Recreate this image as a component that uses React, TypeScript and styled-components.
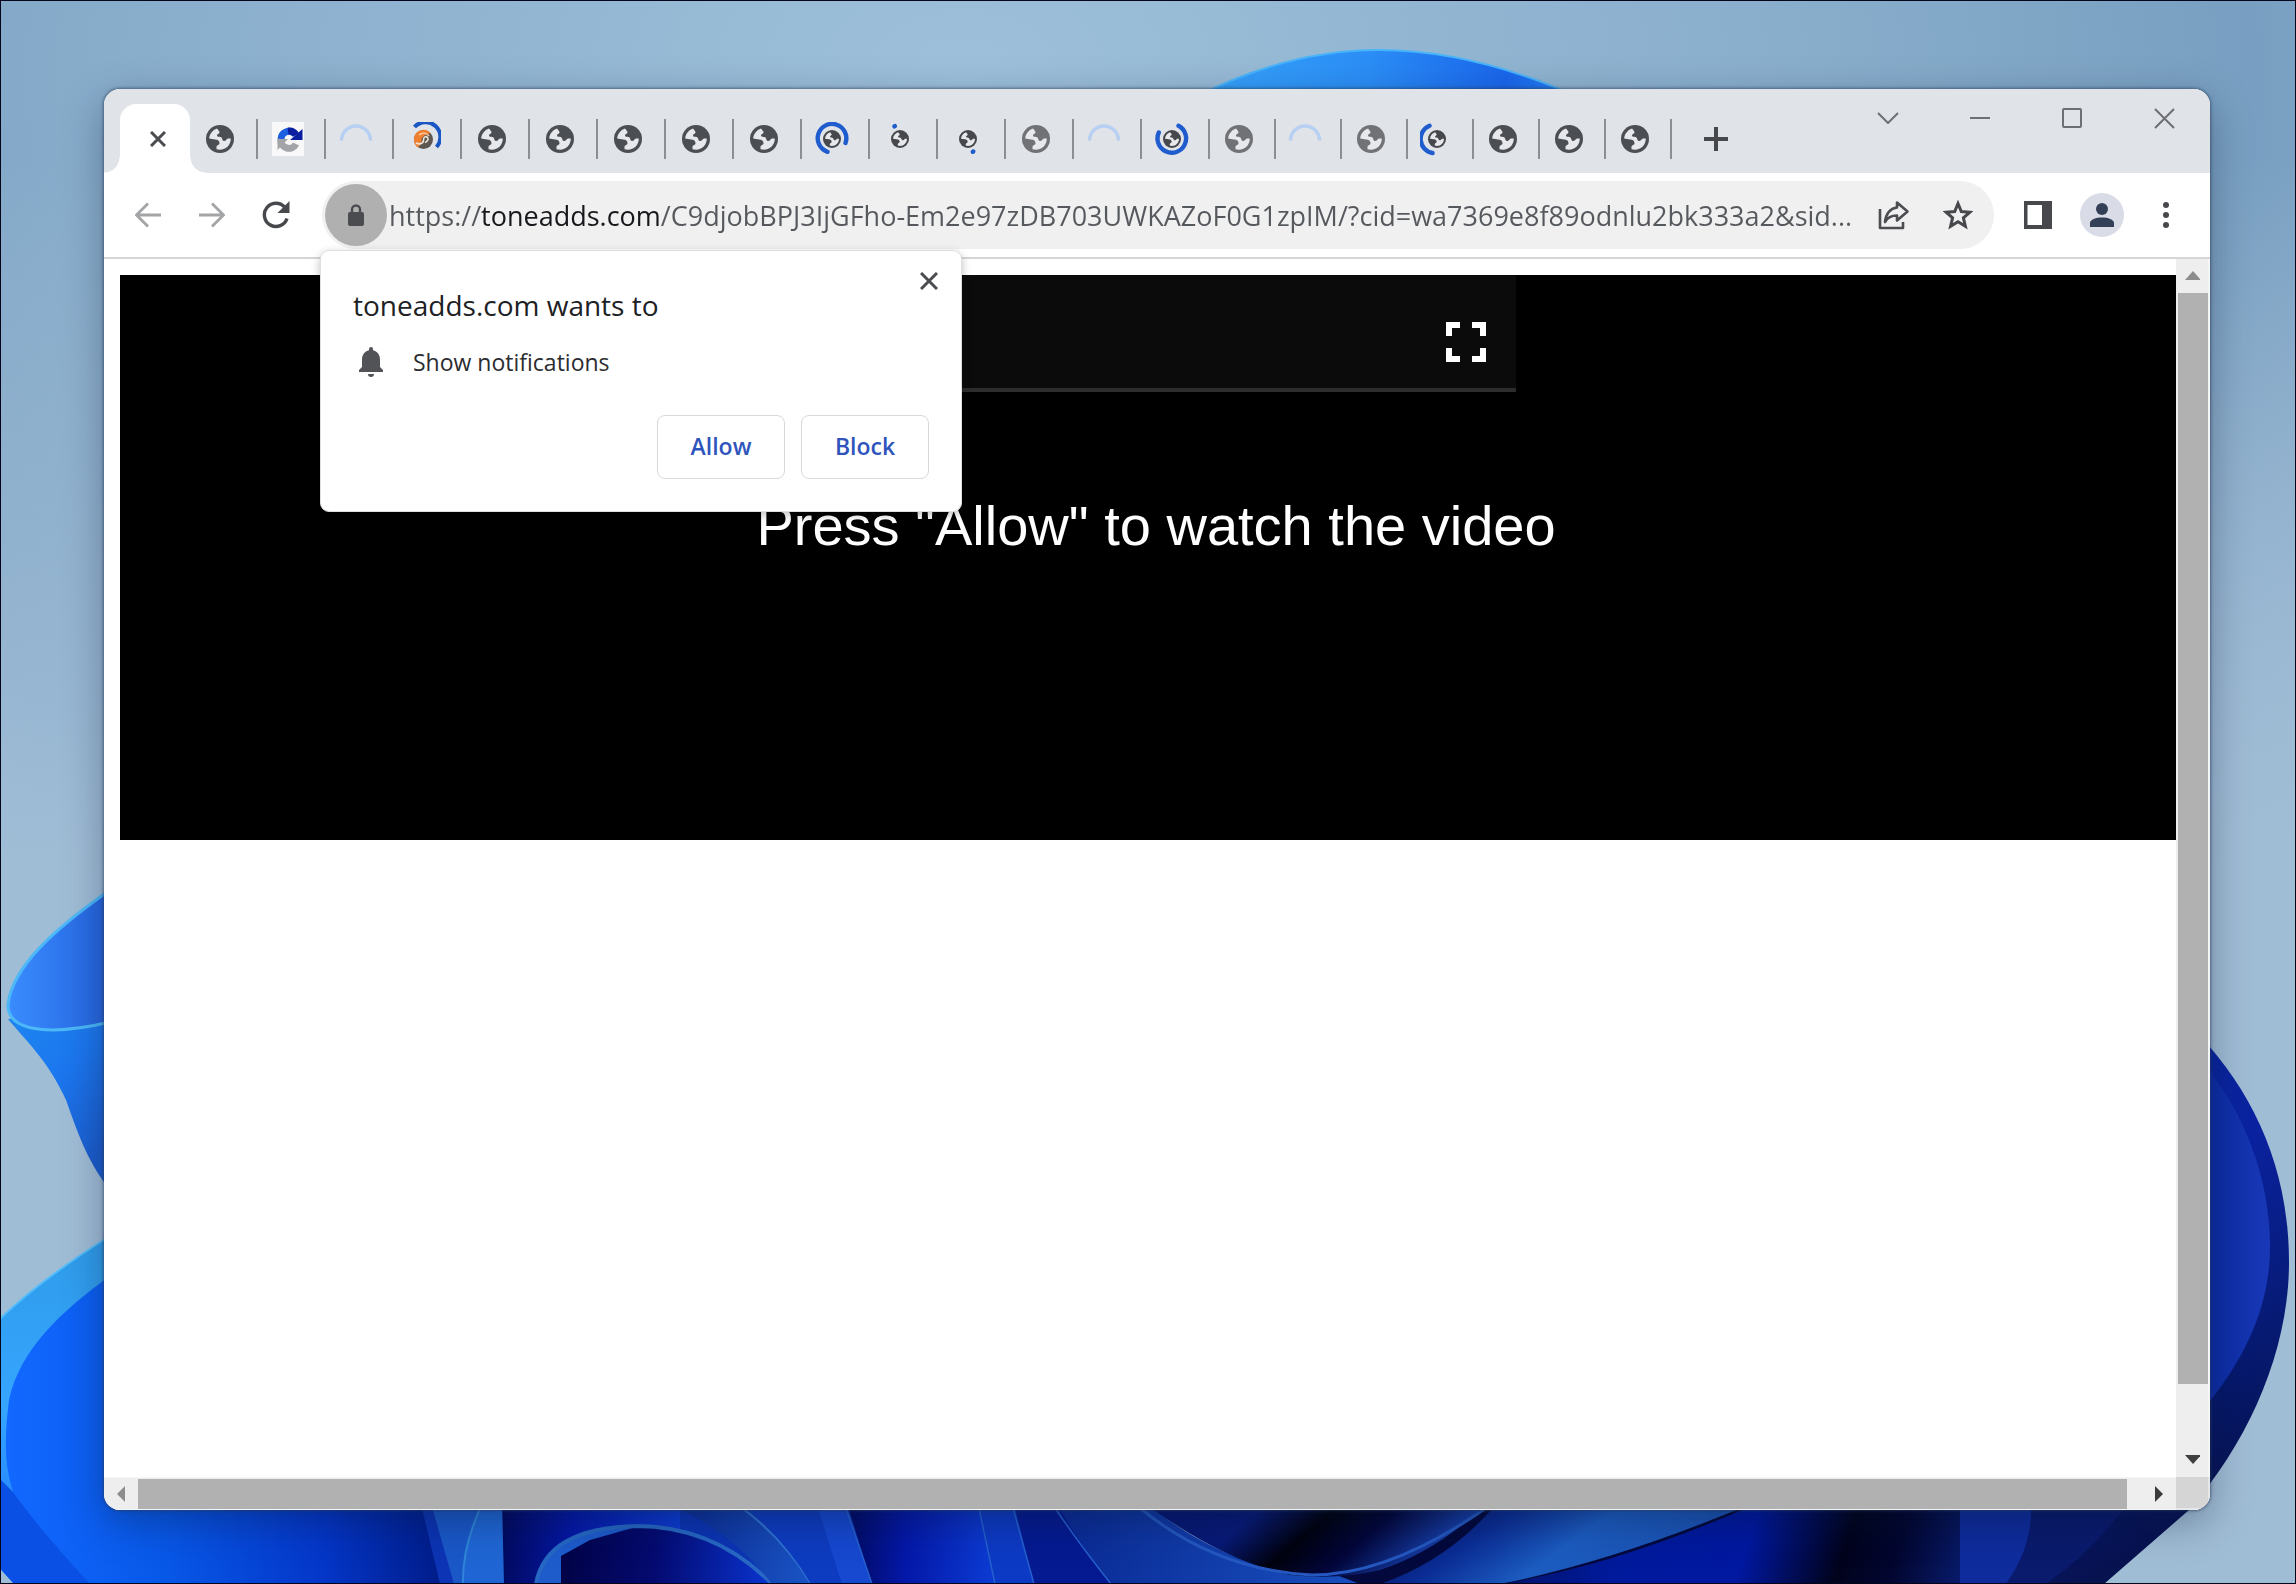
import React from "react";
import styled, { createGlobalStyle } from "styled-components";

const GlobalStyle = createGlobalStyle`
  * { box-sizing: border-box; }
  html, body { margin: 0; }
  body {
    font-family: "Open Sans", "Segoe UI", sans-serif;
    color: #202124;
    overflow: hidden;
  }
  button { font: inherit; color: inherit; border: 0; background: none; padding: 0; margin: 0; }
  svg { display: block; }
`;

const Desktop = styled.div`
  position: relative;
  display: flex;
  height: 100vh;
  padding: 89px 86px 74px 104px;
  overflow: hidden;
  background: #9bbad3;
`;

const WallpaperArt = styled.svg`
  position: absolute;
  inset: 0;
  width: 100%;
  height: 100%;
`;

const ScreenEdge = styled.div`
  position: absolute;
  inset: 0;
  border: 1px solid #05061c;
  pointer-events: none;
`;

const BrowserWindow = styled.main`
  position: relative;
  flex: 1;
  min-width: 0;
  display: flex;
  flex-direction: column;
  border-radius: 16px;
  background: #fff;
  box-shadow: 0 0 3px 1px rgba(40, 60, 90, 0.6), 0 12px 40px rgba(10, 20, 50, 0.35);
`;

const TitleBar = styled.header`
  display: flex;
  height: 84px;
  padding-left: 16px;
  border-radius: 16px 16px 0 0;
  background: #e0e3e8;
`;

const TabStrip = styled.div`
  display: flex;
  flex: 1;
  align-items: flex-end;
`;

const ActiveTab = styled.div`
  position: relative;
  display: flex;
  align-items: center;
  justify-content: center;
  width: 70px;
  height: 69px;
  padding-left: 6px;
  border-radius: 16px 16px 0 0;
  background: #fff;

  &::before,
  &::after {
    content: "";
    position: absolute;
    bottom: 0;
    width: 16px;
    height: 16px;
  }
  &::before {
    right: 100%;
    background: radial-gradient(circle at 0 0, transparent 15px, #fff 16px);
  }
  &::after {
    left: 100%;
    background: radial-gradient(circle at 100% 0, transparent 15px, #fff 16px);
  }
`;

const BackgroundTab = styled.button<{ $width: number }>`
  display: flex;
  align-items: center;
  justify-content: center;
  width: ${(p) => p.$width}px;
  height: 40px;
  margin-bottom: 14px;
  padding-right: 6px;
  border-right: 2px solid #8b8e93;
`;

const IconButton = styled.button<{ $size?: number }>`
  display: flex;
  flex: none;
  align-items: center;
  justify-content: center;
  width: ${(p) => p.$size ?? 64}px;
  height: ${(p) => p.$size ?? 64}px;
`;

const NewTab = styled(IconButton)`
  width: 88px;
  height: 68px;
`;

const WindowControls = styled.div`
  display: flex;
`;

const WindowControl = styled.button`
  display: flex;
  align-items: center;
  justify-content: center;
  width: 92px;
  height: 58px;
`;

const Toolbar = styled.nav`
  display: flex;
  align-items: center;
  height: 86px;
  padding: 0 12px;
  border-bottom: 2px solid #d3d5d7;
`;

const NavButtons = styled.div`
  display: flex;
  width: 206px;
`;

const Omnibox = styled.form`
  display: flex;
  flex: 1;
  align-items: center;
  min-width: 0;
  height: 68px;
  padding: 0 4px 0 3px;
  border-radius: 34px;
  background: #f0f0f1;
`;

const SiteInfo = styled(IconButton)`
  border-radius: 50%;
  background: #b0b0b1;
`;

const UrlInput = styled.input`
  flex: 1;
  min-width: 0;
  height: 56px;
  margin-left: 2px;
  padding: 0;
  border: 0;
  outline: 0;
  font-family: "Open Sans", "Segoe UI", sans-serif;
  font-size: 27px;
  color: #55585c;
  text-overflow: ellipsis;
  background: linear-gradient(90deg, #55585c 91px, #17181b 91px, #17181b 270px, #55585c 270px);
  background-clip: text;
  -webkit-background-clip: text;
  -webkit-text-fill-color: transparent;
`;

const ToolbarActions = styled.div`
  display: flex;
  padding-left: 12px;
`;

const Avatar = styled.span`
  display: flex;
  align-items: center;
  justify-content: center;
  width: 44px;
  height: 44px;
  border-radius: 50%;
  background: #d9dce7;
`;

const Viewport = styled.div`
  display: grid;
  flex: 1;
  min-height: 0;
  grid-template-columns: minmax(0, 1fr) 34px;
  grid-template-rows: minmax(0, 1fr) 33px;
  border-radius: 0 0 16px 16px;
  overflow: hidden;
`;

const Page = styled.section`
  padding: 16px 0 0 16px;
  overflow: hidden;
  background: #fff;
`;

const Video = styled.div`
  display: flex;
  flex-direction: column;
  align-items: center;
  width: calc(100% + 16px);
  height: 565px;
  background: #000;
`;

const PlayerBar = styled.div`
  display: flex;
  align-items: center;
  justify-content: flex-end;
  width: 720px;
  height: 117px;
  padding: 20px 20px 0 0;
  border-bottom: 4px solid #2d2d2d;
  background: #0b0b0b;
`;

const VideoMessage = styled.p`
  margin: 102px 0 0;
  font-family: "Liberation Sans", Arial, sans-serif;
  font-size: 56px;
  line-height: 64px;
  color: #fff;
  white-space: nowrap;
`;

const ScrollTrack = styled.div<{ $vertical?: boolean }>`
  display: flex;
  flex-direction: ${(p) => (p.$vertical ? "column" : "row")};
  background: #eeeeef;
  border-style: solid;
  border-color: #f4f5f6;
  border-width: ${(p) => (p.$vertical ? "0 2px 0 0" : "1px 0 1px 0")};
`;

const ScrollArrow = styled.button`
  display: flex;
  flex: 0 0 34px;
  align-items: center;
  justify-content: center;
`;

const ScrollThumb = styled.div<{ $vertical?: boolean; $end: number }>`
  flex: 1;
  margin: ${(p) => (p.$vertical ? `0 0 ${p.$end}px 2px` : `1px ${p.$end}px 0 0`)};
  background: #b1b1b1;
`;

const ScrollCorner = styled.div`
  background: #d5d5d5;
  border: solid #e6e7e8;
  border-width: 0 2px 2px 0;
`;

const Popup = styled.section`
  position: absolute;
  top: 161px;
  left: 216px;
  width: 642px;
  height: 262px;
  padding: 30px 32px;
  border: 1px solid #dddfe2;
  border-radius: 9px;
  background: #fff;
  box-shadow: 0 3px 10px rgba(0, 0, 0, 0.25);
`;

const PopupTitle = styled.h1`
  margin: 0;
  font-size: 28px;
  font-weight: 400;
  line-height: 48px;
  color: #202124;
`;

const PopupClose = styled(IconButton)`
  position: absolute;
  top: 0;
  right: 2px;
`;

const Permission = styled.p`
  display: flex;
  align-items: center;
  gap: 26px;
  margin: 16px 0 0;
  padding-left: 2px;
  font-size: 23px;
  line-height: 34px;
  color: #2c2d31;
`;

const PopupActions = styled.div`
  display: flex;
  justify-content: flex-end;
  gap: 16px;
  margin-top: 36px;
`;

const PopupButton = styled.button`
  width: 128px;
  height: 64px;
  padding-bottom: 2px;
  border: 1px solid #d6d9dd;
  border-radius: 8px;
  font-size: 23px;
  font-weight: 600;
  color: #2f55bd;
`;

type TabKind = "globe" | "faded" | "sync" | "waiting" | "firefly" | "arc" | "dotTop" | "dotBottom" | "ring" | "arcLeft";

const wideTabs: TabKind[] = [
  "globe", "sync", "waiting", "firefly", "globe", "globe", "globe", "globe", "globe",
  "arc", "dotTop", "dotBottom", "faded", "waiting", "ring",
];
const narrowTabs: TabKind[] = ["faded", "waiting", "faded", "arcLeft", "globe", "globe", "globe"];

const GlobeShape = ({ color }: { color: string }) => (
  <>
    <circle cx="14" cy="14" r="14" fill={color} />
    <path
      fill="#e6e8ec"
      d="M11 3.500C6.500 5 3.500 9 3.200 13.500L9 14.500C12 14.500 13.500 16 13.500 18.500 13.500 20 10.500 20 10.500 22V24.300C18.500 26.500 25 20.500 24.800 13.500L22 13.500C20.500 14 19.500 16.500 17.800 16 16 15.500 16.500 12.500 14.500 12 12.500 11.800 11 11.800 11 10.500 11 9 13 9 13.500 7.500 13.800 6.500 12.500 5.500 11 3.500z"
    />
  </>
);

const spinnerPaths: Partial<Record<TabKind, string>> = {
  arc: "M12.500 29.800A14.300 14.300 0 1 1 30.500 21",
  ring: "M23.500 3.800A14.300 14.300 0 1 1 3.800 10.500",
  arcLeft: "M9.500 3.700A14.300 14.300 0 0 0 12.500 31",
  dotTop: "M11.400 4.400l.5-.3",
  dotBottom: "M21.800 29.800l.5-.3",
};

const Favicon = ({ kind }: { kind: TabKind }) => {
  if (kind === "globe" || kind === "faded") {
    return (
      <svg width="28" height="28" viewBox="0 0 28 28" aria-hidden="true">
        <GlobeShape color={kind === "globe" ? "#4b4e52" : "#707276"} />
      </svg>
    );
  }
  if (kind === "waiting") {
    return (
      <svg width="34" height="34" viewBox="0 0 34 34" fill="none" aria-hidden="true">
        <path d="M2.500 18.500A14.500 14.500 0 0 1 31.500 18.500" stroke="#b6cff2" strokeWidth="3.400" />
      </svg>
    );
  }
  if (kind === "sync") {
    return (
      <svg width="32" height="34" viewBox="0 0 32 34" fill="none" aria-hidden="true">
        <path fill="#f8f8f8" d="M0 0h32v34H0z" />
        <path d="M9 17a8 8 0 0 1 14-5" stroke="#1d5fe0" strokeWidth="7" />
        <path d="M16 9a8 8 0 0 1 8 4" stroke="#0a1fa0" strokeWidth="7" />
        <path fill="#0a1fa0" d="M30.500 7v11H18z" />
        <path d="M9 17a8 8 0 0 0 15 5" stroke="#a2a4a8" strokeWidth="7" />
        <path fill="#a2a4a8" d="M5.500 28V17H16z" />
      </svg>
    );
  }
  if (kind === "firefly") {
    return (
      <svg width="34" height="34" viewBox="0 0 34 34" fill="none" aria-hidden="true">
        <path d="M7.500 5A14.300 14.300 0 0 1 29.500 25" stroke="#1a56c4" strokeWidth="4" />
        <circle cx="16.500" cy="17.500" r="9.500" fill="#5c5751" />
        <path fill="#f08030" d="M7 17.500A9.500 9.500 0 0 1 23.500 11l-5 1.500-4 4 0 5-3.500 4A9.500 9.500 0 0 1 7 17.500z" />
        <path d="M9 21c4 2 7.500.5 7.500-3s2.500-4 4-2.500 0 4-2.500 5" stroke="#f0e6da" strokeWidth="1.600" />
        <path d="M12 13c3-3 8-2 10 1" stroke="#f9c79a" strokeWidth="1.400" />
      </svg>
    );
  }
  return (
    <svg width="34" height="34" viewBox="0 0 34 34" fill="none" aria-hidden="true">
      <path d={spinnerPaths[kind]} stroke="#1f5ccd" strokeWidth="4.400" strokeLinecap="round" />
      <svg x="8" y="8" width="18" height="18" viewBox="0 0 28 28">
        <GlobeShape color="#46484c" />
      </svg>
    </svg>
  );
};

const Cross = ({ size, width = 3, color = "#4a4c50" }: { size: number; width?: number; color?: string }) => (
  <svg width={size} height={size} viewBox={`0 0 ${size} ${size}`} stroke={color} strokeWidth={width} aria-hidden="true">
    <path d={`M1 1L${size - 1} ${size - 1}M${size - 1} 1L1 ${size - 1}`} />
  </svg>
);

const Arrow = ({ flip }: { flip?: boolean }) => (
  <svg width="26" height="26" viewBox="0 0 26 26" fill="none" stroke="#a3a4a6" strokeWidth="2.800" aria-hidden="true">
    <path d={flip ? "M0 13H24M13 1.500L24.500 13 13 24.500" : "M26 13H2M13 1.500L1.500 13 13 24.500"} />
  </svg>
);

const Triangle = ({ d, color }: { d: string; color: string }) => (
  <svg width="16" height="16" viewBox="0 0 16 16" aria-hidden="true">
    <path d={d} fill={color} />
  </svg>
);

const Wallpaper = () => (
  <WallpaperArt viewBox="0 0 2296 1584" preserveAspectRatio="none" aria-hidden="true">
    <defs>
      <radialGradient id="sky" cx="0.42" cy="0.05" r="0.75">
        <stop offset="0" stopColor="#9ec0da" />
        <stop offset="0.5" stopColor="#88adcb" />
        <stop offset="0.75" stopColor="#789fc1" />
        <stop offset="1" stopColor="#9bb7d0" />
      </radialGradient>
      <linearGradient id="haze" x1="0" y1="0" x2="0" y2="1">
        <stop offset="0.1" stopColor="#a5c0d8" stopOpacity="0" />
        <stop offset="0.55" stopColor="#a0bdd6" stopOpacity="1" />
      </linearGradient>
      <linearGradient id="top" x1="0" x2="1">
        <stop offset="0" stopColor="#37a4fb" />
        <stop offset="0.45" stopColor="#2b8ef6" />
        <stop offset="0.8" stopColor="#1a66ec" />
        <stop offset="1" stopColor="#2a8af8" />
      </linearGradient>
      <linearGradient id="leafUp" x1="0" x2="1">
        <stop offset="0" stopColor="#3a8cff" />
        <stop offset="1" stopColor="#2463dd" />
      </linearGradient>
      <linearGradient id="leafDown" x1="0" x2="0.6" y1="0" y2="1">
        <stop offset="0" stopColor="#1d87f0" />
        <stop offset="0.5" stopColor="#1c76ee" />
        <stop offset="1" stopColor="#1b5ccc" />
      </linearGradient>
      <linearGradient id="rim" x1="0" x2="0" y1="0" y2="1">
        <stop offset="0" stopColor="#2f9be8" />
        <stop offset="0.5" stopColor="#35a5ff" />
        <stop offset="1" stopColor="#1a70ff" />
      </linearGradient>
      <linearGradient id="body" x1="0" x2="1">
        <stop offset="0" stopColor="#1268ff" />
        <stop offset="0.35" stopColor="#0858e8" />
        <stop offset="0.7" stopColor="#0436c8" />
        <stop offset="1" stopColor="#00187f" />
      </linearGradient>
      <linearGradient id="fold" x1="0" x2="1">
        <stop offset="0" stopColor="#020a60" />
        <stop offset="0.4" stopColor="#0418a8" />
        <stop offset="1" stopColor="#0c3cd4" />
      </linearGradient>
      <linearGradient id="arch" x1="0" x2="1">
        <stop offset="0" stopColor="#01013c" />
        <stop offset="0.5" stopColor="#040a70" />
        <stop offset="1" stopColor="#0a34d0" />
      </linearGradient>
      <linearGradient id="light" x1="0" x2="1">
        <stop offset="0" stopColor="#0a2a94" />
        <stop offset="1" stopColor="#1a54c4" />
      </linearGradient>
      <linearGradient id="bowl" x1="0" x2="1" y1="0" y2="0.25">
        <stop offset="0" stopColor="#061470" />
        <stop offset="0.35" stopColor="#081a78" />
        <stop offset="0.55" stopColor="#01020e" />
        <stop offset="0.72" stopColor="#02063a" />
        <stop offset="1" stopColor="#1c4cc4" />
      </linearGradient>
      <linearGradient id="deep" x1="0" x2="1" y1="0" y2="0.05">
        <stop offset="0" stopColor="#02105c" />
        <stop offset="0.25" stopColor="#001a9c" />
        <stop offset="0.48" stopColor="#0118a0" />
        <stop offset="0.66" stopColor="#01031c" />
        <stop offset="0.76" stopColor="#020630" />
        <stop offset="1" stopColor="#0d2c9c" />
      </linearGradient>
      <linearGradient id="beam" x1="0" x2="1" y1="0" y2="0.3">
        <stop offset="0" stopColor="#020740" />
        <stop offset="0.35" stopColor="#0a2c94" />
        <stop offset="0.6" stopColor="#1c5cc0" />
        <stop offset="1" stopColor="#1a50b0" />
      </linearGradient>
      <linearGradient id="petal" x1="0" x2="0.3" y1="0" y2="1">
        <stop offset="0" stopColor="#0a2a9c" />
        <stop offset="0.4" stopColor="#0a22a0" />
        <stop offset="0.75" stopColor="#061a72" />
        <stop offset="1" stopColor="#071250" />
      </linearGradient>
      <linearGradient id="petalIn" x1="0" x2="1">
        <stop offset="0" stopColor="#0a2aa0" />
        <stop offset="1" stopColor="#1838b8" />
      </linearGradient>
    </defs>
    <path fill="url(#sky)" d="M0 0h2296v1584H0z" />
    <path fill="url(#haze)" d="M0 0h2296v1584H0z" />

    <path d="M1190 100Q1285 50 1379 50 1475 50 1585 100z" fill="url(#top)" stroke="#48b4fa" strokeWidth="2" />

    <path d="M8 1019C25 1040 48 1060 66 1100 80 1140 90 1165 110 1190V1010z" fill="url(#leafDown)" />
    <path d="M110 890C60 925 12 965 8 1005 8 1035 60 1034 110 1022z" fill="url(#leafUp)" stroke="#4cb8f8" strokeWidth="3" />

    <path d="M0 1319Q40 1280 110 1236V1584H14L0 1569z" fill="url(#rim)" />
    <path d="M0 1319Q40 1280 110 1236" fill="none" stroke="#52bdfa" strokeWidth="2" />
    <path d="M110 1276C60 1312 20 1350 9 1400 4 1440 4 1470 16 1500L60 1584H460V1400H110z" fill="url(#body)" />
    <path d="M13 1492Q40 1530 90 1584H14L1 1569V1480z" fill="#0a50e4" />

    <path d="M420 1500H1160V1584H440z" fill="#0c34b4" />
    <path d="M430 1500H505V1584H454z" fill="#1a58c8" />
    <path d="M484 1500Q462 1545 463 1584H504V1500z" fill="#1f66d4" />
    <path d="M484 1500Q462 1545 463 1584" fill="none" stroke="#2f86d8" strokeWidth="2" />
    <path d="M502 1500H680V1584H504z" fill="url(#fold)" />
    <path d="M536 1584Q546 1528 636 1526 715 1526 772 1584z" fill="url(#arch)" />
    <path d="M536 1584Q548 1528 636 1527L590 1540 561 1556V1584z" fill="#1e5ccc" />
    <path d="M536 1584Q546 1528 636 1526 715 1526 772 1584" fill="none" stroke="#2668c4" strokeWidth="4" />
    <path d="M672 1500H746Q790 1545 811 1584H772Q730 1530 672 1506z" fill="url(#light)" />
    <path d="M742 1508Q785 1540 811 1584" fill="none" stroke="#2f74d4" strokeWidth="2" />
    <path d="M746 1508H846L872 1584H811Q785 1540 746 1508z" fill="#0e3cc0" />
    <path d="M818 1508L842 1584H872L846 1508z" fill="#1648d0" />
    <path d="M846 1500H979L995 1584H872z" fill="url(#fold)" />
    <path d="M979 1500H1013L1034 1584H995z" fill="#0d3ac4" />
    <path d="M1013 1500H1055Q1080 1545 1111 1584H1034z" fill="#051a90" />
    <path d="M1055 1500H1143Q1230 1575 1340 1576L1400 1584H1111Q1080 1545 1055 1500z" fill="url(#light)" />
    <path d="M979 1508L995 1584M1013 1508L1034 1584M1055 1508Q1080 1545 1111 1584M846 1508L872 1584" fill="none" stroke="#2560cc" strokeWidth="1.500" />

    <path d="M1140 1500H2100V1584H1360z" fill="#03093c" />
    <path d="M1140 1500H1490Q1440 1550 1380 1570 1340 1580 1290 1575 1220 1560 1140 1500z" fill="url(#bowl)" />
    <path d="M1140 1508Q1215 1570 1312 1575 1390 1575 1486 1508" fill="none" stroke="#2458c0" strokeWidth="3" />
    <path d="M1500 1500H1760Q1620 1560 1500 1584H1380Q1450 1560 1500 1500z" fill="url(#beam)" />
    <path d="M1765 1500H2045V1584H1500Q1620 1565 1765 1500z" fill="url(#deep)" />

    <path d="M2200 1036C2255 1095 2289 1170 2289 1262 2289 1350 2250 1440 2189 1510L2104 1584H2000V1500H2200z" fill="url(#petal)" />
    <path d="M2200 1060C2245 1110 2270 1180 2270 1247 2270 1300 2250 1355 2200 1413z" fill="url(#petalIn)" />
    <path d="M2031 1500Q2034 1545 2006 1584H2046Q2095 1550 2130 1500z" fill="#0a1a6c" />
    <path d="M2031 1500Q2034 1545 2006 1584H1960V1500z" fill="#0e2c9c" />
  </WallpaperArt>
);

export default function App() {
  return (
    <>
      <GlobalStyle />
      <Desktop>
        <Wallpaper />
        <BrowserWindow>
          <TitleBar>
            <TabStrip>
              <ActiveTab>
                <IconButton $size={32} aria-label="Close tab">
                  <Cross size={16} />
                </IconButton>
              </ActiveTab>
              {wideTabs.map((kind, i) => (
                <BackgroundTab key={i} $width={68} aria-label={`Tab ${i + 2}`}>
                  <Favicon kind={kind} />
                </BackgroundTab>
              ))}
              {narrowTabs.map((kind, i) => (
                <BackgroundTab key={i} $width={66} aria-label={`Tab ${i + 17}`}>
                  <Favicon kind={kind} />
                </BackgroundTab>
              ))}
              <NewTab aria-label="New tab">
                <svg width="24" height="24" viewBox="0 0 24 24" stroke="#46484c" strokeWidth="4" aria-hidden="true">
                  <path d="M12 0V24M0 12H24" />
                </svg>
              </NewTab>
            </TabStrip>
            <WindowControls>
              <WindowControl aria-label="Search tabs">
                <svg width="22" height="12" viewBox="0 0 22 12" fill="none" stroke="#6d6f73" strokeWidth="2">
                  <path d="M1 1L11 11 21 1" />
                </svg>
              </WindowControl>
              <WindowControl aria-label="Minimize">
                <svg width="20" height="2" viewBox="0 0 20 2" fill="#6d6f73">
                  <path d="M0 0H20V2H0z" />
                </svg>
              </WindowControl>
              <WindowControl aria-label="Maximize">
                <svg width="20" height="20" viewBox="0 0 20 20" fill="none" stroke="#6d6f73" strokeWidth="2">
                  <rect x="1" y="1" width="18" height="18" rx="1" />
                </svg>
              </WindowControl>
              <WindowControl aria-label="Close">
                <Cross size={21} width={2} color="#6d6f73" />
              </WindowControl>
            </WindowControls>
          </TitleBar>

          <Toolbar>
            <NavButtons>
              <IconButton aria-label="Back"><Arrow /></IconButton>
              <IconButton aria-label="Forward"><Arrow flip /></IconButton>
              <IconButton aria-label="Reload">
                <svg width="28" height="28" viewBox="0 0 28 28" fill="none" aria-hidden="true">
                  <path d="M25 17.500A11.600 11.600 0 1 1 22.500 6" stroke="#46484c" strokeWidth="3.400" />
                  <path d="M27.500 0V12H15.500z" fill="#46484c" />
                </svg>
              </IconButton>
            </NavButtons>
            <Omnibox onSubmit={(e) => e.preventDefault()}>
              <SiteInfo $size={62} type="button" aria-label="View site information">
                <svg width="16" height="22" viewBox="0 0 16 22" aria-hidden="true">
                  <path d="M4 9V5.500a4 4 0 0 1 8 0V9" fill="none" stroke="#4b4c50" strokeWidth="2.400" />
                  <rect y="8" width="16" height="14" rx="2" fill="#4b4c50" />
                </svg>
              </SiteInfo>
              <UrlInput
                aria-label="Address"
                spellCheck={false}
                defaultValue="https://toneadds.com/C9djobBPJ3IjGFho-Em2e97zDB703UWKAZoF0G1zpIM/?cid=wa7369e8f89odnlu2bk333a2&sid..."
              />
              <IconButton type="button" aria-label="Share">
                <svg width="32" height="30" viewBox="0 0 32 30" fill="none" stroke="#4b4d51" strokeWidth="2.600" strokeLinejoin="round">
                  <path d="M2 9V28H25V22" />
                  <path d="M19 2.500L29.500 11.500 19 20.500V15.500C13 15.500 9.500 17.500 7 22 8 14 12 8.500 19 7.500z" />
                </svg>
              </IconButton>
              <IconButton type="button" aria-label="Bookmark">
                <svg width="30" height="30" viewBox="0 0 30 30" fill="none" stroke="#46484c" strokeWidth="3">
                  <path d="M15 3.500L18.300 11.500 27 12.200 20.400 17.900 22.400 26.300 15 21.800 7.600 26.300 9.600 17.900 3 12.200 11.700 11.500z" />
                </svg>
              </IconButton>
            </Omnibox>
            <ToolbarActions>
              <IconButton aria-label="Side panel">
                <svg width="28" height="28" viewBox="0 0 28 28" aria-hidden="true">
                  <path fillRule="evenodd" fill="#46484c" d="M0 0H28V28H0zM3.500 4V24H18V4z" />
                </svg>
              </IconButton>
              <IconButton aria-label="Profile">
                <Avatar>
                  <svg width="24" height="24" viewBox="0 0 24 24" fill="#333f56" aria-hidden="true">
                    <circle cx="12" cy="6" r="6" />
                    <path d="M0 24V20C0 12.500 24 12.500 24 20V24z" />
                  </svg>
                </Avatar>
              </IconButton>
              <IconButton aria-label="Menu">
                <svg width="6" height="28" viewBox="0 0 6 28" fill="#46484c" aria-hidden="true">
                  <circle cx="3" cy="4" r="3" />
                  <circle cx="3" cy="14" r="3" />
                  <circle cx="3" cy="24" r="3" />
                </svg>
              </IconButton>
            </ToolbarActions>
          </Toolbar>

          <Viewport>
            <Page>
              <Video>
                <PlayerBar>
                  <IconButton $size={60} aria-label="Full screen">
                    <svg width="40" height="40" viewBox="0 0 40 40" fill="none" stroke="#fff" strokeWidth="6">
                      <path d="M3 14V3H14M26 3H37V14M37 26V37H26M14 37H3V26" />
                    </svg>
                  </IconButton>
                </PlayerBar>
                <VideoMessage>Press "Allow" to watch the video</VideoMessage>
              </Video>
            </Page>
            <ScrollTrack $vertical>
              <ScrollArrow aria-label="Scroll up"><Triangle d="M9 3L17 12H1z" color="#8d8d8d" /></ScrollArrow>
              <ScrollThumb $vertical $end={59} />
              <ScrollArrow aria-label="Scroll down"><Triangle d="M9 12L17 3H1z" color="#3f3f3f" /></ScrollArrow>
            </ScrollTrack>
            <ScrollTrack>
              <ScrollArrow aria-label="Scroll left"><Triangle d="M4 8L12 0V16z" color="#8d8d8d" /></ScrollArrow>
              <ScrollThumb $end={15} />
              <ScrollArrow aria-label="Scroll right"><Triangle d="M12 8L4 0V16z" color="#3a3a3a" /></ScrollArrow>
            </ScrollTrack>
            <ScrollCorner />
          </Viewport>

          <Popup role="dialog" aria-labelledby="permission-title">
            <PopupTitle id="permission-title">toneadds.com wants to</PopupTitle>
            <PopupClose $size={60} aria-label="Dismiss"><Cross size={18} /></PopupClose>
            <Permission>
              <svg width="32" height="30" viewBox="0 0 32 30" fill="#525356" aria-hidden="true">
                <path d="M16 0a2 2 0 0 1 2 2v1.200c4.500 1 7 4.800 7 9.300V20l3 3v2H4v-2l3-3v-7.500C7 8 9.500 4.200 14 3.200V2a2 2 0 0 1 2-2zM13 27h6a3 3 0 0 1-6 0z" />
              </svg>
              Show notifications
            </Permission>
            <PopupActions>
              <PopupButton>Allow</PopupButton>
              <PopupButton>Block</PopupButton>
            </PopupActions>
          </Popup>
        </BrowserWindow>
        <ScreenEdge />
      </Desktop>
    </>
  );
}
